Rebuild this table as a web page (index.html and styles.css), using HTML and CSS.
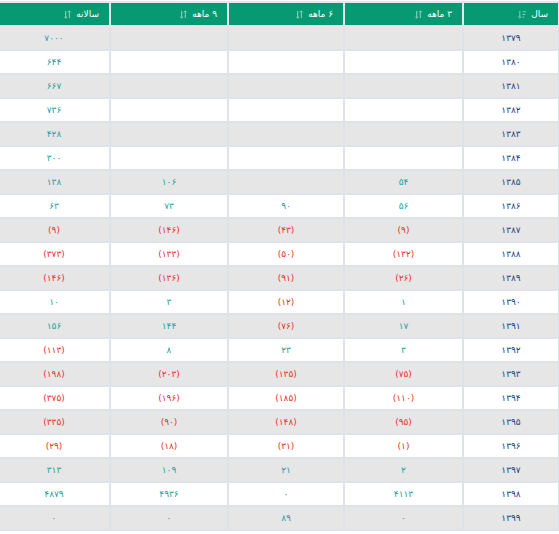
FILE: index.html
```html
<!DOCTYPE html>
<html lang="fa" dir="rtl">
<head>
<meta charset="utf-8">
<link rel="stylesheet" href="styles.css">
</head>
<body>
<table class="grid">
  <colgroup>
    <col class="c-year"><col class="c-q"><col class="c-h"><col class="c-n"><col class="c-y">
  </colgroup>
  <thead>
    <tr>
      <th><span class="th-in"><svg class="sort active" viewBox="0 0 10 10"><path d="M2 1v8M0.5 7.5L2 9l1.5-1.5M5 2h4M5 5h3M5 8h2" stroke="currentColor" stroke-width="1.1" fill="none"/></svg>سال</span></th>
      <th><span class="th-in"><svg class="sort" viewBox="0 0 10 10"><path d="M3 1v8M1.5 7.5L3 9l1.5-1.5M7 9V1M5.5 2.5L7 1l1.5 1.5" stroke="currentColor" stroke-width="1.1" fill="none"/></svg>۳ ماهه</span></th>
      <th><span class="th-in"><svg class="sort" viewBox="0 0 10 10"><path d="M3 1v8M1.5 7.5L3 9l1.5-1.5M7 9V1M5.5 2.5L7 1l1.5 1.5" stroke="currentColor" stroke-width="1.1" fill="none"/></svg>۶ ماهه</span></th>
      <th><span class="th-in"><svg class="sort" viewBox="0 0 10 10"><path d="M3 1v8M1.5 7.5L3 9l1.5-1.5M7 9V1M5.5 2.5L7 1l1.5 1.5" stroke="currentColor" stroke-width="1.1" fill="none"/></svg>۹ ماهه</span></th>
      <th><span class="th-in"><svg class="sort" viewBox="0 0 10 10"><path d="M3 1v8M1.5 7.5L3 9l1.5-1.5M7 9V1M5.5 2.5L7 1l1.5 1.5" stroke="currentColor" stroke-width="1.1" fill="none"/></svg>سالانه</span></th>
    </tr>
  </thead>
  <tbody>
    <tr><td class="yr">۱۳۷۹</td><td></td><td></td><td></td><td class="pos">۷۰۰۰</td></tr>
    <tr><td class="yr">۱۳۸۰</td><td></td><td></td><td></td><td class="pos">۶۴۴</td></tr>
    <tr><td class="yr">۱۳۸۱</td><td></td><td></td><td></td><td class="pos">۶۶۷</td></tr>
    <tr><td class="yr">۱۳۸۲</td><td></td><td></td><td></td><td class="pos">۷۳۶</td></tr>
    <tr><td class="yr">۱۳۸۳</td><td></td><td></td><td></td><td class="pos">۴۲۸</td></tr>
    <tr><td class="yr">۱۳۸۴</td><td></td><td></td><td></td><td class="pos">۳۰۰</td></tr>
    <tr><td class="yr">۱۳۸۵</td><td class="pos">۵۴</td><td></td><td class="pos">۱۰۶</td><td class="pos">۱۳۸</td></tr>
    <tr><td class="yr">۱۳۸۶</td><td class="pos">۵۶</td><td class="pos">۹۰</td><td class="pos">۷۳</td><td class="pos">۶۳</td></tr>
    <tr><td class="yr">۱۳۸۷</td><td class="neg">(۹)</td><td class="neg">(۴۳)</td><td class="neg">(۱۴۶)</td><td class="neg">(۹)</td></tr>
    <tr><td class="yr">۱۳۸۸</td><td class="neg">(۱۳۲)</td><td class="neg">(۵۰)</td><td class="neg">(۱۳۳)</td><td class="neg">(۳۷۳)</td></tr>
    <tr><td class="yr">۱۳۸۹</td><td class="neg">(۲۶)</td><td class="neg">(۹۱)</td><td class="neg">(۱۳۶)</td><td class="neg">(۱۴۶)</td></tr>
    <tr><td class="yr">۱۳۹۰</td><td class="pos">۱</td><td class="neg">(۱۲)</td><td class="pos">۳</td><td class="pos">۱۰</td></tr>
    <tr><td class="yr">۱۳۹۱</td><td class="pos">۱۷</td><td class="neg">(۷۶)</td><td class="pos">۱۴۴</td><td class="pos">۱۵۶</td></tr>
    <tr><td class="yr">۱۳۹۲</td><td class="pos">۳</td><td class="pos">۲۳</td><td class="pos">۸</td><td class="neg">(۱۱۳)</td></tr>
    <tr><td class="yr">۱۳۹۳</td><td class="neg">(۷۵)</td><td class="neg">(۱۳۵)</td><td class="neg">(۲۰۳)</td><td class="neg">(۱۹۸)</td></tr>
    <tr><td class="yr">۱۳۹۴</td><td class="neg">(۱۱۰)</td><td class="neg">(۱۸۵)</td><td class="neg">(۱۹۶)</td><td class="neg">(۳۷۵)</td></tr>
    <tr><td class="yr">۱۳۹۵</td><td class="neg">(۹۵)</td><td class="neg">(۱۴۸)</td><td class="neg">(۹۰)</td><td class="neg">(۳۳۵)</td></tr>
    <tr><td class="yr">۱۳۹۶</td><td class="neg">(۱)</td><td class="neg">(۳۱)</td><td class="neg">(۱۸)</td><td class="neg">(۲۹)</td></tr>
    <tr><td class="yr">۱۳۹۷</td><td class="pos">۲</td><td class="pos">۲۱</td><td class="pos">۱۰۹</td><td class="pos">۳۱۳</td></tr>
    <tr><td class="yr">۱۳۹۸</td><td class="pos">۴۱۱۳</td><td class="zero">۰</td><td class="pos">۴۹۳۶</td><td class="pos">۴۸۷۹</td></tr>
    <tr><td class="yr">۱۳۹۹</td><td class="zero">۰</td><td class="pos">۸۹</td><td class="zero">۰</td><td class="zero">۰</td></tr>
  </tbody>
</table>
</body>
</html>
```
FILE: styles.css
```css
html, body {
  margin: 0;
  padding: 0;
  background: #ffffff;
}
body {
  font-family: "DejaVu Sans", "Noto Sans", sans-serif;
  font-size: 9px;
}
.grid {
  width: 561px;
  border-collapse: collapse;
  table-layout: fixed;
  margin-top: 1px;
  margin-right: -1px;
}
.c-year { width: 96px; }
.c-q { width: 119px; }
.c-h { width: 116px; }
.c-n { width: 118px; }
.c-y { width: 112px; }
.grid th {
  background: #079a72;
  color: #ffffff;
  font-weight: normal;
  text-align: right;
  height: 22px;
  padding: 0 10px;
  border: 2px solid #e4e8ec;
}
.th-in {
  display: inline-flex;
  align-items: center;
  gap: 4px;
  direction: rtl;
}
.sort {
  width: 9px;
  height: 9px;
  color: #8fd6bd;
  order: 2;
}
.sort.active {
  color: #7ad0b0;
}
.grid td {
  height: 22px;
  padding: 0;
  text-align: center;
  border: 2px solid #dfe3e8;
  border-top: 0;
}
.grid tbody tr:nth-child(odd) td {
  background: #e6e6e6;
}
.grid tbody tr:nth-child(even) td {
  background: #ffffff;
}
.yr { color: #1f3c88; }
.pos { color: #18a3a3; }
.neg { color: #ee2f2b; }
.zero { color: #10a080; }
```
